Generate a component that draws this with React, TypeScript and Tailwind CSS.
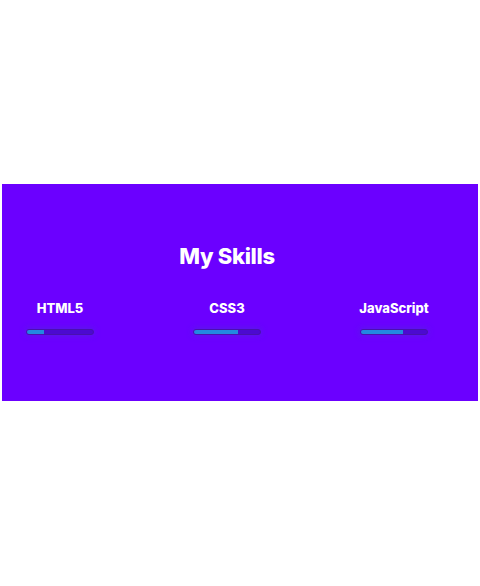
import React from "react";

const skills = [
  { name: "HTML5", pct: 25 },
  { name: "CSS3", pct: 67 },
  { name: "JavaScript", pct: 64 },
];

export default function App() {
  return (
    <div className="w-[480px] h-[586px] bg-white pt-[184px]" style={{ fontFamily: "Inter, 'Open Sans', sans-serif" }}>
      <section className="ml-[2px] w-[476px] h-[217px] bg-[#6b00ff] pt-[56px]">
        <h2 className="text-center text-white text-[22px] leading-[32px] font-extrabold tracking-[-0.3px] pr-[26px]">My Skills</h2>
        <div className="mt-[26px] flex gap-[51px]">
          {skills.map((s) => (
            <div key={s.name} className="w-[116px] flex flex-col items-center">
              <div className="text-white text-[13px] leading-[20px] font-extrabold">{s.name}</div>
              <div className="mt-[11px] w-[68px] h-[6px] rounded-full bg-[#4c0ad0] border border-[#4a10b0] shadow-[0_0_6px_rgba(80,40,220,0.9)] overflow-hidden">
                <div className="h-full bg-[#2388e0]" style={{ width: `${s.pct}%` }} />
              </div>
            </div>
          ))}
        </div>
      </section>
    </div>
  );
}
